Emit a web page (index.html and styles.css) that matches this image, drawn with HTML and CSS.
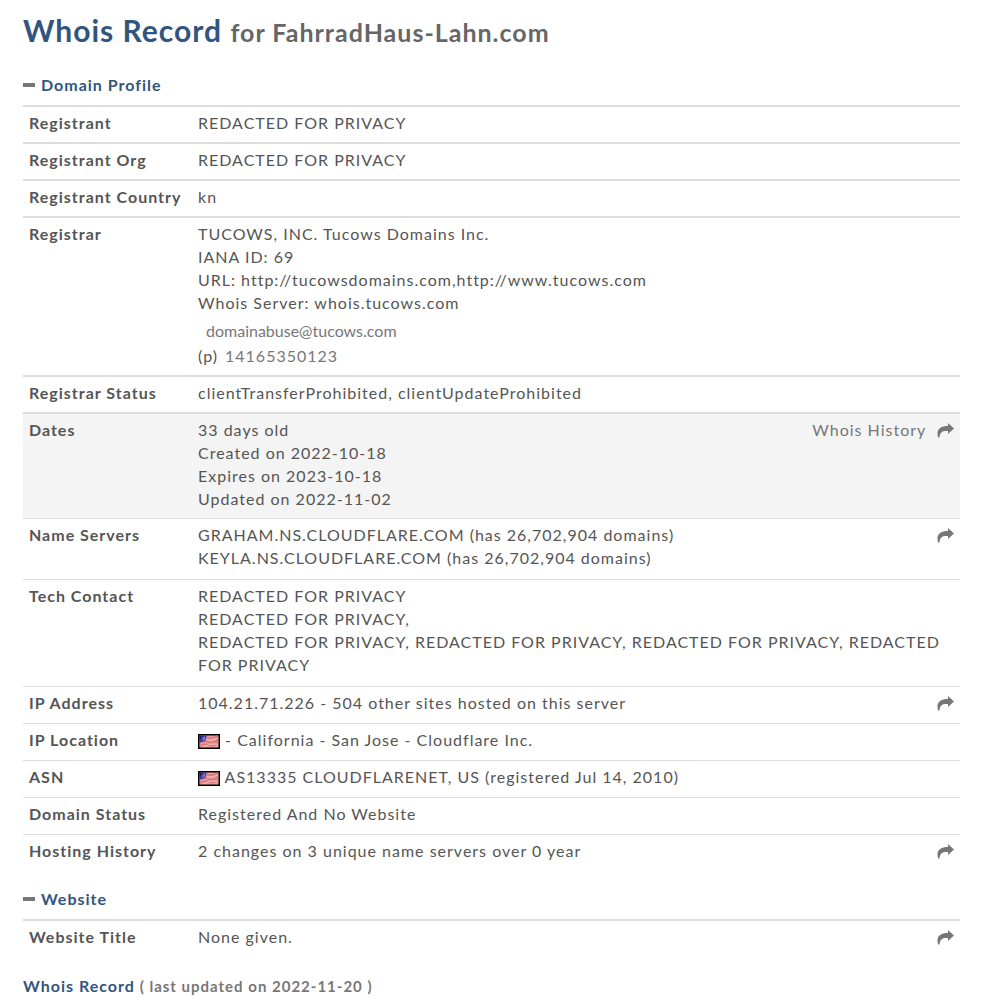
FILE: index.html
```
<!DOCTYPE html>
<html lang="en">
<head>
<meta charset="utf-8">
<meta name="viewport" content="width=device-width, initial-scale=1">
<title>Whois Record for FahrradHaus-Lahn.com</title>
<link rel="stylesheet" href="styles.css">
</head>
<body>

<svg class="defs" width="0" height="0" aria-hidden="true">
  <symbol id="share" viewBox="0 0 17 15">
    <path d="M11 0 L17 5.500 L11 11 V8 C6 7.500 3 8.500 2.500 14.500 H1.200 C-1.200 7 2.500 3 11 3 Z"/>
  </symbol>
  <symbol id="flag" viewBox="0 0 22 15">
    <rect width="22" height="15" fill="#000"/>
    <rect x="1.500" y="1.500" width="19" height="12" fill="#e99a9a"/>
    <path d="M2 9 Q6 6 11 8 T20 5 M2 12 Q6 9 11 11 T20 8 M9 4 Q14 5 20 2" fill="none" stroke="#d57a7c" stroke-width="1.500"/>
    <path d="M9 6 Q14 7 20 4 M5 13 Q10 10 20 10" fill="none" stroke="#f3bcbb"/>
    <path d="M1.500 1.500 H9 L7 7 L1.500 8.500 Z" fill="#3c3a99"/>
    <path d="M1.500 1.500 H4 L2 6 H1.500 Z" fill="#191960"/>
    <path d="M4 5 L7 2 V5 L5 7 Z" fill="#7f7fd0"/>
  </symbol>
</svg>

<div class="container">
<h1>Whois Record <small>for FahrradHaus-Lahn.com</small></h1>

<h2><button type="button" class="toggle"><span class="minus"></span>Domain Profile</button></h2>
<table class="whois">
  <tr class="thick"><th scope="row">Registrant</th><td>REDACTED FOR PRIVACY</td><td class="more"></td></tr>
  <tr class="thick"><th scope="row">Registrant Org</th><td>REDACTED FOR PRIVACY</td><td class="more"></td></tr>
  <tr class="thick"><th scope="row">Registrant Country</th><td>kn</td><td class="more"></td></tr>
  <tr class="thick">
    <th scope="row">Registrar</th>
    <td colspan="2">
      TUCOWS, INC. Tucows Domains Inc.<br>
      IANA ID: 69<br>
      URL: http://tucowsdomains.com,http://www.tucows.com<br>
      Whois Server: whois.tucows.com
      <div class="mail">domainabuse@tucows.com</div>
      <div class="phone">(p) <span>14165350123</span></div>
    </td>
  </tr>
  <tr class="thick"><th scope="row">Registrar Status</th><td colspan="2">clientTransferProhibited, clientUpdateProhibited</td></tr>
  <tr class="thick active">
    <th scope="row">Dates</th>
    <td>33 days old<br>Created on 2022-10-18<br>Expires on 2023-10-18<br>Updated on 2022-11-02</td>
    <td class="more"><a href="#">Whois History <svg class="share"><use href="#share"/></svg></a></td>
  </tr>
  <tr class="multi">
    <th scope="row">Name Servers</th>
    <td>GRAHAM.NS.CLOUDFLARE.COM (has 26,702,904 domains)<br>KEYLA.NS.CLOUDFLARE.COM (has 26,702,904 domains)</td>
    <td class="more"><a href="#" aria-label="Name server report"><svg class="share"><use href="#share"/></svg></a></td>
  </tr>
  <tr class="multi">
    <th scope="row">Tech Contact</th>
    <td colspan="2">REDACTED FOR PRIVACY<br>REDACTED FOR PRIVACY,<br>REDACTED FOR PRIVACY, REDACTED FOR PRIVACY, REDACTED FOR PRIVACY, REDACTED FOR PRIVACY</td>
  </tr>
  <tr>
    <th scope="row">IP Address</th>
    <td>104.21.71.226 - 504 other sites hosted on this server</td>
    <td class="more"><a href="#" aria-label="Reverse IP"><svg class="share"><use href="#share"/></svg></a></td>
  </tr>
  <tr><th scope="row">IP Location</th><td colspan="2"><svg class="flag"><use href="#flag"/></svg> - California - San Jose - Cloudflare Inc.</td></tr>
  <tr><th scope="row">ASN</th><td colspan="2"><svg class="flag"><use href="#flag"/></svg> AS13335 CLOUDFLARENET, US (registered Jul 14, 2010)</td></tr>
  <tr><th scope="row">Domain Status</th><td colspan="2">Registered And No Website</td></tr>
  <tr>
    <th scope="row">Hosting History</th>
    <td>2 changes on 3 unique name servers over 0 year</td>
    <td class="more"><a href="#" aria-label="Hosting history"><svg class="share"><use href="#share"/></svg></a></td>
  </tr>
</table>

<h2><button type="button" class="toggle"><span class="minus"></span>Website</button></h2>
<table class="whois">
  <tr class="thick">
    <th scope="row">Website Title</th>
    <td>None given.</td>
    <td class="more"><a href="#" aria-label="Website title"><svg class="share"><use href="#share"/></svg></a></td>
  </tr>
</table>

<h3>Whois Record <small>( last updated on 2022-11-20 )</small></h3>
</div>

</body>
</html>
```
FILE: styles.css
```
body {
  margin: 0;
  background: #fff;
  color: #555;
  font: 16px/23px Lato, sans-serif;
  letter-spacing: 1px;
}

.defs {
  position: absolute;
}

.container {
  padding: 11px 22px 0 23px;
}

h1 {
  margin: 0 0 22px;
  font-size: 30px;
  line-height: 38px;
  color: #32557f;
}

h1 small {
  font-size: 25px;
  color: #666;
}

h2 {
  margin: 0;
  padding: 0 0 9px;
  font-size: 16px;
}

.toggle {
  display: flex;
  align-items: center;
  gap: 6px;
  padding: 0;
  border: 0;
  background: none;
  color: #32557f;
  font: inherit;
  letter-spacing: inherit;
  cursor: pointer;
}

.minus {
  width: 12px;
  height: 4px;
  background: #777;
}

.whois {
  width: 100%;
  margin-bottom: 16px;
  border-collapse: separate;
  border-spacing: 0;
}

.whois th,
.whois td {
  padding: 4px 6px 9px;
  border-top: 1px solid #ddd;
  text-align: left;
  vertical-align: top;
}

.whois .thick th,
.whois .thick td {
  padding-bottom: 8px;
  border-top-width: 2px;
}

.whois .multi td {
  padding-bottom: 10px;
}

.whois th {
  width: 157px;
  white-space: nowrap;
}

.whois .active {
  background: #f4f4f4;
}

.whois .more {
  text-align: right;
  white-space: nowrap;
}

.more a {
  color: #777;
  text-decoration: none;
}

.share {
  width: 17px;
  height: 15px;
  margin-left: 6px;
  vertical-align: -2px;
  fill: #777;
}

.flag {
  width: 22px;
  height: 15px;
  vertical-align: -3px;
}

.mail {
  padding: 5px 0 2px 8px;
  color: #777;
  letter-spacing: normal;
}

.phone span {
  margin-left: 2px;
  color: #777;
}

h3 {
  margin: 0;
  padding: 2px 0;
  font-size: 16px;
  color: #32557f;
}

h3 small {
  font-size: 15px;
  color: #777;
}
```
